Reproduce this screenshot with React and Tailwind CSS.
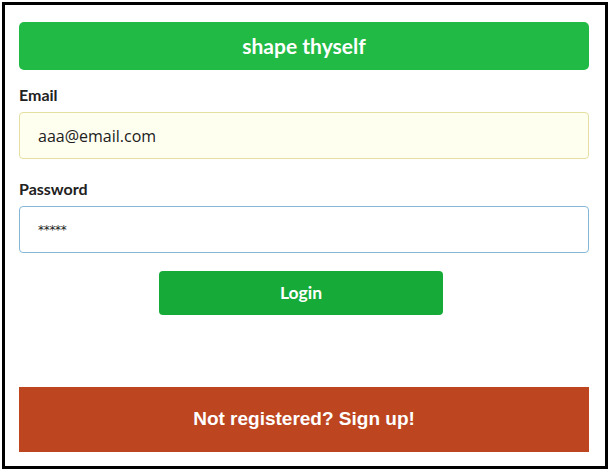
export default function App() {
  return (
    <div className="bg-white w-[611px] h-[472px] pt-[2px] pl-[2px]">
      <div className="w-[606px] h-[467px] border-[3px] border-black pt-[17px] pl-[14px]">
        <div className="w-[570px] flex flex-col font-['Lato',sans-serif]">
          {/* Title bar */}
          <div className="h-[48px] rounded-[5px] bg-[#21ba45] flex items-center justify-center text-white text-[21px] font-bold">
            shape thyself
          </div>

          {/* Email */}
          <label className="mt-[15px] mb-[7px] h-[20px] leading-[20px] text-[16px] font-bold text-[#212121]">
            Email
          </label>
          <div className="h-[47px] rounded-[4px] border border-[#e5dfa1] bg-[#fffff0] flex items-center pl-[18px] text-[16px] text-[#212121] font-['Open_Sans',sans-serif]">
            aaa@email.com
          </div>

          {/* Password */}
          <label className="mt-[20px] mb-[7px] h-[20px] leading-[20px] text-[16px] font-bold text-[#212121]">
            Password
          </label>
          <div className="h-[47px] rounded-[4px] border border-[#85b7d9] bg-white flex items-center pl-[18px] text-[12px] text-[#212121] font-['DejaVu_Sans',sans-serif] tracking-[-0.3px]">
            *****
          </div>

          {/* Login */}
          <button className="mt-[18px] ml-[140px] w-[284px] h-[44px] rounded-[4px] bg-[#16ab39] text-white text-[17.5px] font-bold flex items-center justify-center">
            Login
          </button>

          {/* Sign up */}
          <div className="mt-[72px] h-[65px] bg-[#bd4520] flex items-center justify-center text-white text-[19px] font-bold font-['Liberation_Sans',Arial,sans-serif]">
            Not registered? Sign up!
          </div>
        </div>
      </div>
    </div>
  )
}
